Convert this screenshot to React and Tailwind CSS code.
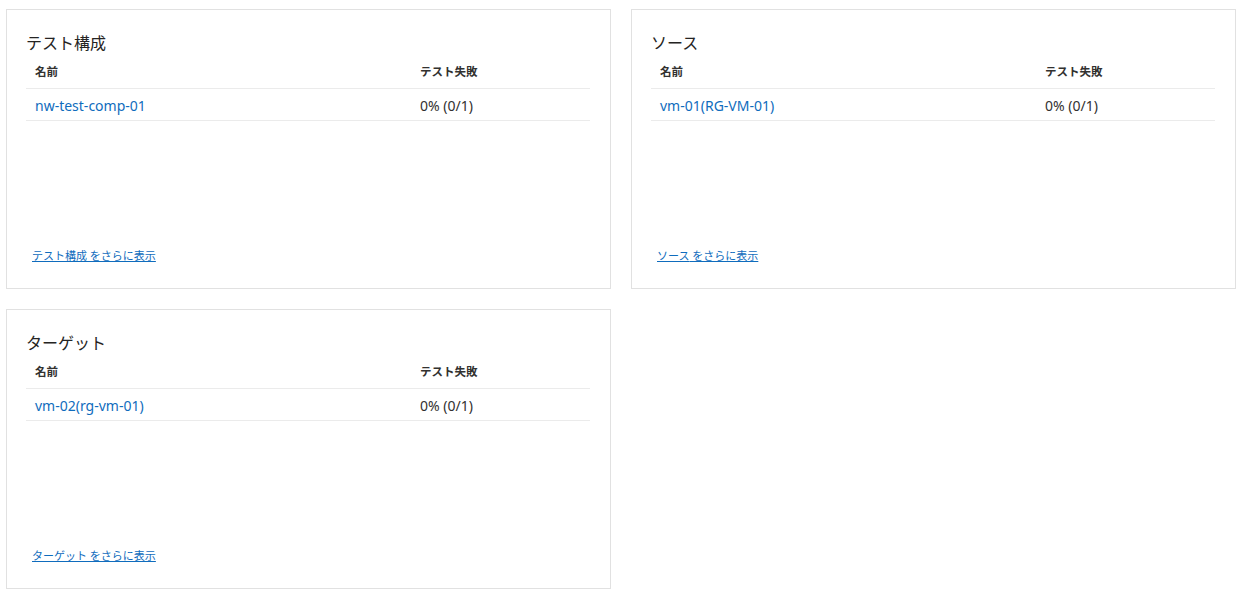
import React from "react";

const font = {
  fontFamily: '"Noto Sans", "Noto Sans CJK JP", sans-serif',
};

const cards = [
  { title: "テスト構成", name: "nw-test-comp-01", link: "テスト構成" },
  { title: "ソース", name: "vm-01(RG-VM-01)", link: "ソース" },
  { title: "ターゲット", name: "vm-02(rg-vm-01)", link: "ターゲット" },
];

const Card = ({ title, name, link }) => {
  return (
    <div className="flex flex-col h-[280px] border border-[#e1e1e1] bg-white pt-[20px] pl-[19px] pr-[20px] pb-[26px]">
      <div className="h-[25px] leading-[25px] text-[16px] text-[#252423] font-['Noto_Sans_CJK_JP']">
        {title}
      </div>
      <div className="grid grid-cols-[385px_1fr] h-[34px] items-center border-b border-[#ebebeb] text-[11.5px] font-bold text-[#323130]">
        <div className="pl-[9px]">名前</div>
        <div className="pl-[9px]">テスト失敗</div>
      </div>
      <div className="grid grid-cols-[385px_1fr] h-[32px] items-center border-b border-[#ebebeb] text-[14px] pt-[2px]">
        <a href="#" className="pl-[9px] text-[#0f6cbd]">
          {name}
        </a>
        <div className="pl-[9px] text-[#323130]">0% (0/1)</div>
      </div>
      <div className="mt-auto pl-[6px] h-[16px] leading-[16px]">
        <a href="#" className="text-[11px] text-[#0f6cbd] underline">
          {link} をさらに表示
        </a>
      </div>
    </div>
  );
};

export default function App() {
  return (
    <div className="min-h-[596px] bg-white pt-[9px] pl-[6px]" style={font}>
      <div className="grid grid-cols-[605px_605px] gap-[20px]">
        {cards.map((c) => (
          <Card key={c.title} {...c} />
        ))}
      </div>
    </div>
  );
}
